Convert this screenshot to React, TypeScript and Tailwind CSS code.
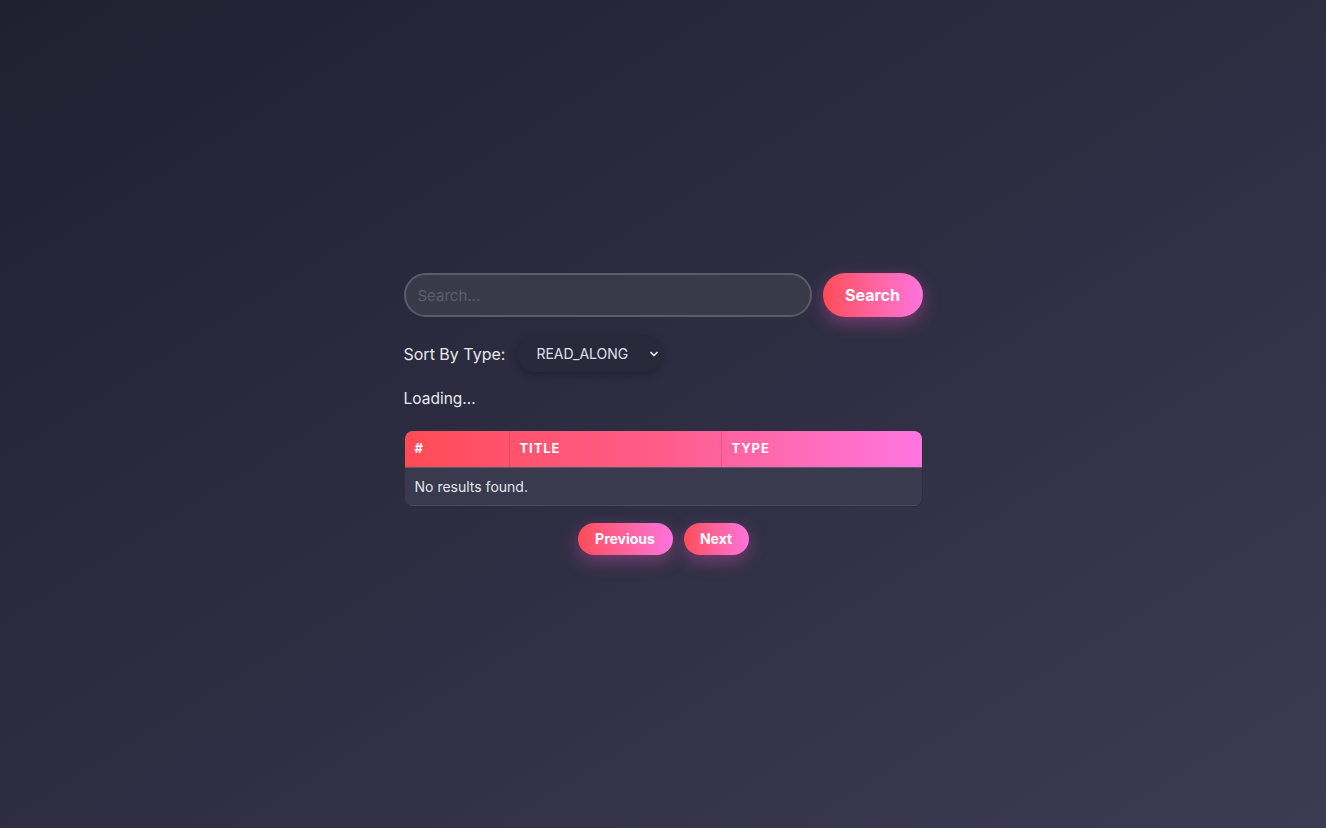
import { ChevronDown } from 'lucide-react';

const gradientBtn =
  'rounded-full bg-gradient-to-r from-[#ff4b55] to-[#ff73dc] text-white font-bold shadow-[0_6px_18px_rgba(255,90,200,0.35)]';

export default function App() {
  return (
    <div
      className="min-h-screen w-full flex items-center justify-center bg-gradient-to-br from-[#212031] to-[#3b3b54] text-[#e8e8ee]"
      style={{ fontFamily: 'Inter, "Noto Sans", sans-serif' }}
    >
      <div className="w-[519px] flex flex-col">
        <div className="flex items-center gap-[11px]">
          <input
            placeholder="Search..."
            className="flex-1 h-[44px] rounded-full border-2 border-[#5b5b6c] bg-[#393949] px-[12px] text-[15px] text-white placeholder:text-[#5d5d70] outline-none"
          />
          <button className={`${gradientBtn} w-[100px] h-[44px] text-[16px]`}>Search</button>
        </div>

        <div className="flex items-center mt-[18px] text-[16px]">
          <span>Sort By Type:</span>
          <div className="ml-[12px] h-[37px] w-[146px] rounded-full bg-[#28283b] shadow-[0_3px_8px_rgba(0,0,0,0.25)] flex items-center pl-[19px] pr-[3px]">
            <span className="text-[14px] text-[#e0e0ea] flex-1">READ_ALONG</span>
            <ChevronDown size={12} strokeWidth={3.5} className="text-[#e8e8ee]" />
          </div>
        </div>

        <p className="mt-[15px] text-[15.5px]">Loading...</p>

        <div className="mt-[19px] rounded-[9px] overflow-hidden bg-[#393a4d] border border-[#2d2d40]">
          <div className="flex h-[37px] bg-gradient-to-r from-[#ff4b55] via-[#ff5c8a] to-[#ff75e0] text-white text-[13px] font-bold tracking-[0.07em] border-b border-[#5a5a6d]">
            <div className="w-[105px] flex items-center px-[10px] border-r border-[#e8455f]">#</div>
            <div className="w-[212px] flex items-center px-[10px] border-r border-[#ef4f85]">TITLE</div>
            <div className="flex-1 flex items-center px-[10px]">TYPE</div>
          </div>
          <div className="h-[38px] flex items-center px-[10px] text-[14px] text-[#e6e6ee] border-b border-[#4a4b5c]">
            No results found.
          </div>
        </div>

        <div className="flex justify-center gap-[11px] mt-[16px]">
          <button className={`${gradientBtn} w-[95px] h-[32px] text-[14px]`}>Previous</button>
          <button className={`${gradientBtn} w-[65px] h-[32px] text-[14px]`}>Next</button>
        </div>
      </div>
    </div>
  );
}
